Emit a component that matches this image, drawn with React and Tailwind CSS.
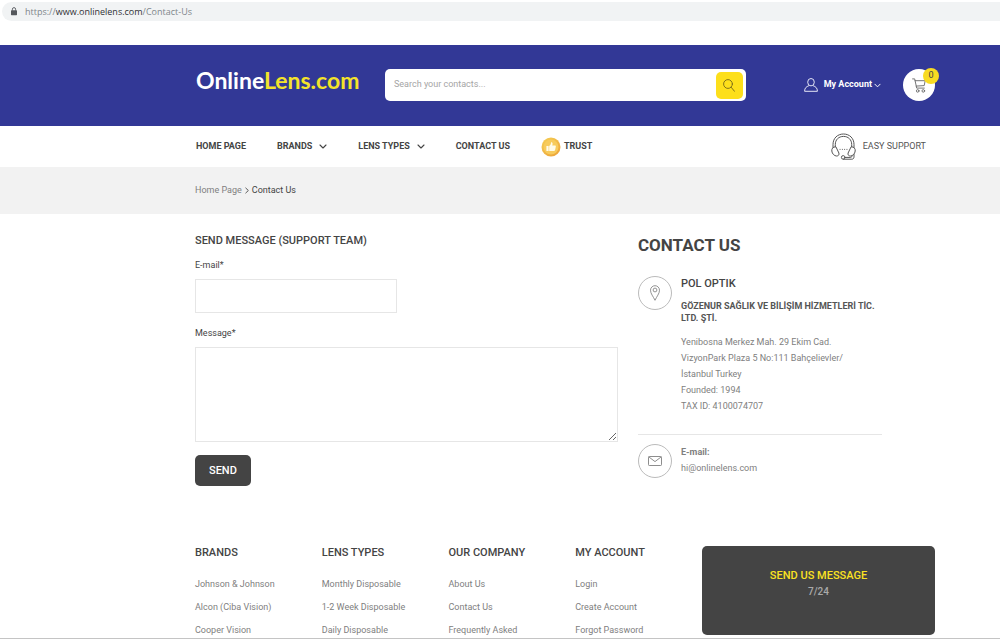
import React from "react";

const sans = "font-['Roboto','Liberation_Sans',sans-serif]";

function ChevronDown({ className }) {
  return (
    <svg viewBox="0 0 8 5" className={className} fill="none" stroke="currentColor" strokeWidth="1.1" strokeLinecap="round" strokeLinejoin="round" aria-hidden="true">
      <path d="M1 1l3 3 3-3" />
    </svg>
  );
}

function LockIcon() {
  return (
    <svg viewBox="0 0 6 9" className="h-[9px] w-[6px]" aria-hidden="true">
      <rect x="0" y="3.2" width="6" height="5" rx="0.6" fill="#55585c" />
      <path d="M1.4 3.6V2.2a1.6 1.6 0 0 1 3.2 0v1.4" fill="none" stroke="#55585c" strokeWidth="0.9" />
    </svg>
  );
}

function UserIcon() {
  return (
    <svg viewBox="0 0 14 14" className="h-[14px] w-[14px]" fill="none" stroke="#e4e5f5" strokeWidth="1" strokeLinejoin="round" aria-hidden="true">
      <ellipse cx="7" cy="4.2" rx="3.3" ry="3.7" />
      <path d="M4.900 7.700C2.300 8.700.6 9.900.6 13.300h12.800c0-3.400-1.700-4.600-4.300-5.600" />
    </svg>
  );
}

function SearchIcon() {
  return (
    <svg viewBox="0 0 12 13" className="h-[13px] w-[12px]" fill="none" stroke="#75681a" strokeWidth="0.9" strokeLinecap="round" aria-hidden="true">
      <circle cx="5" cy="5" r="4.400" />
      <path d="M8.200 8.300l3.300 4" />
    </svg>
  );
}

function CartIcon() {
  return (
    <svg viewBox="0 0 14 15" className="h-[15px] w-[14px]" fill="none" stroke="#666" strokeWidth="0.9" strokeLinecap="round" strokeLinejoin="round" aria-hidden="true">
      <path d="M.6.9h2.100l2 9.200h7.600M3.100 2.700h10.100l-1 4.900-8 .5" />
      <circle cx="5.700" cy="12.900" r="1.300" />
      <circle cx="11.300" cy="12.900" r="1.300" />
    </svg>
  );
}

function TrustIcon() {
  return (
    <svg viewBox="0 0 20 20" className="h-[20px] w-[20px]" aria-hidden="true">
      <defs>
        <linearGradient id="trust" x1="0" y1="0" x2="0.7" y2="1">
          <stop offset="0" stopColor="#f5cf55" />
          <stop offset="1" stopColor="#eda63a" />
        </linearGradient>
      </defs>
      <circle cx="10" cy="10" r="9.500" fill="url(#trust)" />
      <circle cx="10" cy="10" r="7.500" fill="#f7cb5c" />
      <path d="M5.400 9h2.200v5H5.400zM8.200 9c1.300-.8 1.700-2 1.900-3.700.9-.2 1.600.4 1.500 1.500l-.3 1.700h2.600c.8 0 1 .6.900 1.200l-.7 3.300c-.2.700-.6 1-1.200 1H8.200z" fill="#fffbe9" />
    </svg>
  );
}

function HeadsetIcon() {
  return (
    <svg viewBox="0 0 25 27" className="h-[27px] w-[25px]" fill="none" stroke="#555" strokeWidth="1" strokeLinecap="round" strokeLinejoin="round" aria-hidden="true">
      <path d="M2 14.500V11.500C2 5.200 6.500 1 12.500 1S23 5.200 23 11.500v3" />
      <path d="M4.300 13.600v-2.100c0-4.800 3.400-8.100 8.200-8.100s8.200 3.300 8.200 8.100v2.100" />
      <path d="M4.500 13.800c-2.800 0-3.900 2-3.700 4.200.3 2.800 2.500 4.900 4.700 5 1.800 0 2.900-1.100 2.500-2.600z" />
      <path d="M20.500 13.800c2.800 0 3.900 2 3.700 4.200-.3 2.800-2.500 4.900-4.700 5-1.800 0-2.900-1.100-2.500-2.600z" />
      <path d="M23 21.500v2.300c0 1.500-.8 2.400-2.200 2.400h-8.300" />
      <path d="M21.200 23.200c-.5.900-1.200 1.200-2.200 1.200h-4.600" />
      <circle cx="12.200" cy="24.400" r="1.800" />
      <path d="M9 16.400h.1M11.300 16.400h.1M13.600 16.400h.1M15.900 16.400h.1" />
    </svg>
  );
}

function PinIcon() {
  return (
    <svg viewBox="0 0 10 16" className="h-[16px] w-[10px]" fill="none" stroke="#888" strokeWidth="0.9" strokeLinejoin="round" aria-hidden="true">
      <path d="M5 15.300C3.300 11.600.5 8.600.5 5.200a4.500 4.500 0 0 1 9 0C9.500 8.600 6.700 11.600 5 15.300z" />
      <circle cx="5" cy="5" r="1.900" />
    </svg>
  );
}

function MailIcon() {
  return (
    <svg viewBox="0 0 14 10" className="h-[10px] w-[14px]" fill="none" stroke="#808080" strokeWidth="0.9" strokeLinejoin="round" aria-hidden="true">
      <rect x="0.500" y="0.500" width="13" height="9" rx="0.800" />
      <path d="M.8.9L7 5.600 13.200.9" />
    </svg>
  );
}

const menu = [
  { label: "HOME PAGE" },
  { label: "BRANDS", more: true },
  { label: "LENS TYPES", more: true },
  { label: "CONTACT US" },
];

const footerColumns = [
  { title: "BRANDS", links: ["Johnson & Johnson", "Alcon (Ciba Vision)", "Cooper Vision"] },
  { title: "LENS TYPES", links: ["Monthly Disposable", "1-2 Week Disposable", "Daily Disposable"] },
  { title: "OUR COMPANY", links: ["About Us", "Contact Us", "Frequently Asked"] },
  { title: "MY ACCOUNT", links: ["Login", "Create Account", "Forgot Password"] },
];

function AddressBar() {
  return (
    <div className="pt-[2px] pb-6 pl-[2px]">
      <div className="flex h-[19px] items-center gap-2 rounded-l-full bg-[#f1f3f4] pl-[9px] font-['Open_Sans','Noto_Sans',sans-serif] text-[9px] text-[#80868b]">
        <LockIcon />
        <span>
          https://<span className="text-[#303134]">www.onlinelens.com</span>/Contact-Us
        </span>
      </div>
    </div>
  );
}

function Header() {
  return (
    <header className="flex h-[81px] items-center bg-[#323896] pr-[65px] pb-px pl-[196px]">
      <a href="#" className="w-[189px] shrink-0 pb-[10px] font-['Lato',sans-serif] text-[23px] leading-7 font-bold text-white">
        Online<span className="text-[#f3e32a]">Lens.com</span>
      </a>
      <form className="flex h-8 min-w-0 flex-1 items-center rounded-[5px] bg-white pr-[3px] pl-[9px]">
        <input
          type="search"
          aria-label="Search"
          placeholder="Search your contacts..."
          className="min-w-0 flex-1 bg-transparent text-[9px] outline-none placeholder:text-[#a5a5a5]"
        />
        <button type="button" aria-label="Search" className="flex h-[27px] w-[27px] items-center justify-center rounded-[5px] bg-[#fddf1b]">
          <SearchIcon />
        </button>
      </form>
      <button type="button" className="ml-[58px] flex items-center text-[9px] font-bold text-white">
        <UserIcon />
        <span className="ml-[6px]">My Account</span>
        <ChevronDown className="ml-[2px] h-[5px] w-[7px]" />
      </button>
      <a href="#" aria-label="Cart" className="relative ml-[22px] flex h-8 w-8 items-center justify-center rounded-full bg-white">
        <CartIcon />
        <span className="absolute -top-px -right-1 flex h-4 w-4 items-center justify-center rounded-full bg-[#f8db22] text-[9px] text-[#444]">0</span>
      </a>
    </header>
  );
}

function Nav() {
  return (
    <nav className="flex h-[41px] items-center gap-[31px] pr-[74px] pl-[196px] text-[9px] font-bold text-[#444]">
      {menu.map((item) => (
        <a key={item.label} href="#" className="flex items-center gap-[7px] whitespace-nowrap">
          {item.label}
          {item.more && <ChevronDown className="h-[5px] w-[8px]" />}
        </a>
      ))}
      <a href="#" className="flex items-center gap-[3px]">
        <TrustIcon />
        TRUST
      </a>
      <a href="#" className="ml-auto flex items-center gap-[7px] font-normal whitespace-nowrap text-[#555]">
        <HeadsetIcon />
        EASY SUPPORT
      </a>
    </nav>
  );
}

function MessageForm() {
  return (
    <form className="flex flex-1 flex-col items-start pt-[19px] text-[9px] leading-4 text-[#444]">
      <h2 className="text-[11px] font-medium">SEND MESSAGE (SUPPORT TEAM)</h2>
      <label htmlFor="email" className="mt-2">E-mail*</label>
      <input id="email" type="email" className="mt-[6px] h-[34px] w-[202px] border border-[#e6e6e6] bg-white px-2 outline-none" />
      <label htmlFor="message" className="mt-3">Message*</label>
      <textarea id="message" className="mt-[6px] h-[95px] w-full resize border border-[#e6e6e6] bg-white p-2 outline-none" />
      <button type="button" className="mt-[13px] h-[31px] rounded-[5px] bg-[#444] px-[14px] text-[11px] font-medium text-white">
        SEND
      </button>
    </form>
  );
}

function IconRing({ children }) {
  return <span className="flex h-[34px] w-[34px] shrink-0 items-center justify-center rounded-full border border-[#bbb]">{children}</span>;
}

function ContactInfo() {
  return (
    <section className="w-[244px] pt-[19px] text-[9px] leading-4 text-[#808080]">
      <h1 className="text-[17px] leading-6 font-bold text-[#444]">CONTACT US</h1>
      <div className="mt-[19px] flex gap-[9px] border-b border-[#e6e6e6] pb-5">
        <IconRing>
          <PinIcon />
        </IconRing>
        <div>
          <h3 className="text-[11px] font-medium text-[#444]">POL OPTIK</h3>
          <p className="mt-2 leading-3 font-bold text-[#555]">GÖZENUR SAĞLIK VE BİLİŞİM HİZMETLERİ TİC. LTD. ŞTİ.</p>
          <address className="mt-[10px] not-italic">
            Yenibosna Merkez Mah. 29 Ekim Cad.
            <br />
            VizyonPark Plaza 5 No:111 Bahçelievler/
            <br />
            İstanbul Turkey
            <br />
            Founded: 1994
            <br />
            TAX ID: 4100074707
          </address>
        </div>
      </div>
      <div className="mt-[9px] flex gap-[9px]">
        <IconRing>
          <MailIcon />
        </IconRing>
        <div>
          <h3 className="font-bold">E-mail:</h3>
          <a href="mailto:hi@onlinelens.com" className="block">hi@onlinelens.com</a>
        </div>
      </div>
    </section>
  );
}

function Footer() {
  return (
    <footer className="border-b border-[#c4c4c4] pr-[65px] pl-[195px]">
      <div className="flex items-start">
        <div className="grid flex-1 grid-cols-4">
          {footerColumns.map((col) => (
            <div key={col.title} className="leading-4 whitespace-nowrap">
              <h4 className="text-[11px] font-medium text-[#444]">{col.title}</h4>
              <ul className="mt-[15px] flex flex-col gap-[7px] text-[9px] text-[#808080]">
                {col.links.map((link) => (
                  <li key={link}>
                    <a href="#" className="block">{link}</a>
                  </li>
                ))}
              </ul>
            </div>
          ))}
        </div>
        <a href="#" className="mt-px flex h-[89px] w-[233px] flex-col items-center rounded-[5px] bg-[#444] pt-[22px] text-[11px] leading-4 font-medium text-[#fbe122]">
          SEND US MESSAGE
          <span className="text-[10px] text-[#aaa]">7/24</span>
        </a>
      </div>
    </footer>
  );
}

export default function App() {
  return (
    <div className={`bg-white ${sans}`}>
      <AddressBar />
      <Header />
      <Nav />
      <div className="flex h-[47px] items-center gap-[3px] bg-[#f2f2f2] pl-[195px] text-[9px] text-[#444]">
        <a href="#" className="text-[#808080]">Home Page</a>
        <svg viewBox="0 0 5 8" className="h-[7px] w-[4px]" fill="none" stroke="#555" strokeWidth="1.200" aria-hidden="true">
          <path d="M.6.600L4.200 4 .6 7.400" />
        </svg>
        <span>Contact Us</span>
      </div>
      <main className="mb-[59px] flex items-start gap-5 pr-[118px] pl-[195px]">
        <MessageForm />
        <ContactInfo />
      </main>
      <Footer />
    </div>
  );
}
